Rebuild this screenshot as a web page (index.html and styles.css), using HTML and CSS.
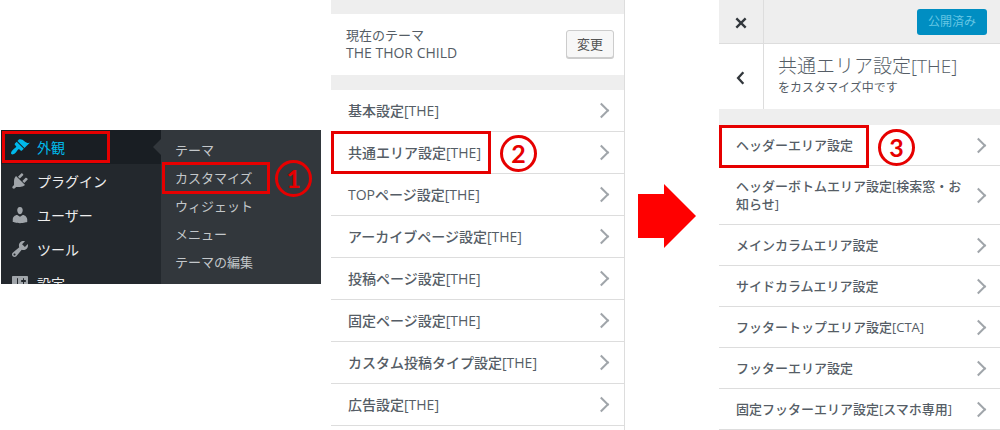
FILE: index.html
```html
<!DOCTYPE html>
<html lang="ja">
  <head>
    <meta charset="UTF-8" />
    <meta name="viewport" content="width=device-width, initial-scale=1.0" />
    <title>ヘッダーエリア設定</title>
    <link rel="stylesheet" href="styles.css">
  </head>
  <body>
    <main class="steps">
      <!-- 1. 管理メニュー -->
      <nav class="admin">
        <ul class="admin-menu">
          <li class="current marked">
            <a href="#">
              <svg class="icon" viewBox="0 0 20 20"><path d="M14.480 11.060L7.410 3.990l1.500-1.500c.5-.56 2.300-.47 3.510.32 1.210.8 1.430 1.280 2.910 2.100 1.180.64 2.450 1.260 4.450.85zm-.71.71L6.700 4.700 4.930 6.470c-.39.39-.39 1.020 0 1.410l1.060 1.060c.39.39.39 1.030 0 1.420-.6.6-1.430 1.110-2.210 1.690-.35.26-.7.53-1.010.84C1.430 14.230.4 16.080 1.400 17.070c.99 1 2.840-.03 4.180-1.360.31-.31.58-.66.85-1.020.57-.78 1.080-1.610 1.690-2.210.39-.39 1.020-.39 1.410 0l1.060 1.060c.39.39 1.020.39 1.410 0z"/></svg>
              外観
            </a>
            <span class="mark"></span>
          </li>
          <li>
            <a href="#">
              <svg class="icon" viewBox="0 0 20 20"><path d="M13.110 4.360L9.870 7.600 8 5.730l3.240-3.240c.35-.34 1.050-.2 1.560.32.52.51.66 1.210.31 1.550zm-8 1.770l.91-1.120 9.010 9.010-1.190.84c-.71.71-2.630 1.160-3.820 1.160H6.140L4.900 17.260c-.59.59-1.540.59-2.120 0-.59-.58-.59-1.530 0-2.120l1.240-1.240v-3.880c0-1.130.4-3.190 1.090-3.890zm7.260 3.970l3.240-3.240c.34-.35 1.040-.21 1.550.31.52.51.66 1.210.31 1.550l-3.240 3.250z"/></svg>
              プラグイン
            </a>
          </li>
          <li>
            <a href="#">
              <svg class="icon" viewBox="0 0 20 20"><path d="M10 9.250c-2.270 0-2.730-3.440-2.730-3.440C7 4.020 7.820 2 9.970 2c2.160 0 2.980 2.020 2.710 3.810 0 0-.41 3.440-2.680 3.440zm0 2.570L12.720 10c2.390 0 4.520 2.330 4.520 4.530v2.490s-3.650 1.130-7.240 1.130c-3.650 0-7.240-1.130-7.240-1.130v-2.490c0-2.250 1.940-4.480 4.470-4.480z"/></svg>
              ユーザー
            </a>
          </li>
          <li>
            <a href="#">
              <svg class="icon" viewBox="0 0 20 20"><path d="M16.680 9.770c-1.340 1.340-3.300 1.670-4.950.99l-5.410 6.520c-.99.99-2.590.99-3.580 0s-.99-2.590 0-3.570l6.520-5.420c-.68-1.650-.35-3.610.99-4.950 1.280-1.280 3.120-1.620 4.720-1.060l-2.890 2.890 2.820 2.820 2.860-2.870c.53 1.580.18 3.390-1.080 4.650zM3.810 16.210c.4.39 1.040.39 1.430 0 .4-.4.4-1.040 0-1.430-.39-.4-1.030-.4-1.430 0-.39.39-.39 1.030 0 1.430z"/></svg>
              ツール
            </a>
          </li>
          <li>
            <a href="#">
              <svg class="icon" viewBox="0 0 20 20"><path d="M18 16V4c0-.55-.45-1-1-1H3c-.55 0-1 .45-1 1v12c0 .55.45 1 1 1h14c.55 0 1-.45 1-1zM8 11h1c.55 0 1 .45 1 1s-.45 1-1 1H8v1.500c0 .28-.22.5-.5.5s-.5-.22-.5-.5V13H6c-.55 0-1-.45-1-1s.45-1 1-1h1V5.500c0-.28.22-.5.5-.5s.5.22.5.5V11zm5-2h-1c-.55 0-1-.45-1-1s.45-1 1-1h1V5.500c0-.28.22-.5.5-.5s.5.22.5.5V7h1c.55 0 1 .45 1 1s-.45 1-1 1h-1v5.500c0 .28-.22.5-.5.5s-.5-.22-.5-.5V9z"/></svg>
              設定
            </a>
          </li>
        </ul>
        <ul class="admin-sub">
          <li><a href="#">テーマ</a></li>
          <li class="marked">
            <a href="#">カスタマイズ</a>
            <span class="mark mark-sub"><b class="num">1</b></span>
          </li>
          <li><a href="#">ウィジェット</a></li>
          <li><a href="#">メニュー</a></li>
          <li><a href="#">テーマの編集</a></li>
        </ul>
      </nav>

      <!-- 2. カスタマイザー -->
      <section class="panel-theme">
        <div class="theme">
          <div>
            <p>現在のテーマ</p>
            <p class="theme-name">THE THOR CHILD</p>
          </div>
          <button class="change">変更</button>
        </div>
        <ul class="rows">
          <li><button class="row">基本設定[THE]</button></li>
          <li class="marked">
            <button class="row">共通エリア設定[THE]</button>
            <span class="mark mark-common"><b class="num">2</b></span>
          </li>
          <li><button class="row">TOPページ設定[THE]</button></li>
          <li><button class="row">アーカイブページ設定[THE]</button></li>
          <li><button class="row">投稿ページ設定[THE]</button></li>
          <li><button class="row">固定ページ設定[THE]</button></li>
          <li><button class="row">カスタム投稿タイプ設定[THE]</button></li>
          <li><button class="row">広告設定[THE]</button></li>
        </ul>
      </section>

      <svg class="arrow" viewBox="0 0 58 64"><path d="M0 10h26V0l32 32-32 32V54H0z"/></svg>

      <!-- 3. 共通エリア設定 -->
      <section class="panel-area">
        <div class="bar">
          <button class="side" aria-label="閉じる">
            <svg viewBox="0 0 12 12"><path d="M2 2l8 8M10 2l-8 8"/></svg>
          </button>
          <button class="publish">公開済み</button>
        </div>
        <div class="heading">
          <button class="side" aria-label="戻る">
            <svg viewBox="0 0 12 12"><path d="M8 1L3.500 6 8 11"/></svg>
          </button>
          <div class="heading-text">
            <h1>共通エリア設定[THE]</h1>
            <p>をカスタマイズ中です</p>
          </div>
        </div>
        <ul class="rows">
          <li class="marked">
            <button class="row">ヘッダーエリア設定</button>
            <span class="mark mark-header"><b class="num">3</b></span>
          </li>
          <li><button class="row">ヘッダーボトムエリア設定[検索窓・お知らせ]</button></li>
          <li><button class="row">メインカラムエリア設定</button></li>
          <li><button class="row">サイドカラムエリア設定</button></li>
          <li><button class="row">フッタートップエリア設定[CTA]</button></li>
          <li><button class="row">フッターエリア設定</button></li>
          <li><button class="row">固定フッターエリア設定[スマホ専用]</button></li>
        </ul>
      </section>
    </main>
  </body>
</html>
```
FILE: styles.css
```css
* {
  box-sizing: border-box;
}
body {
  margin: 0;
  background: #fff;
  font-family: "Open Sans", "Noto Sans CJK JP", sans-serif;
  font-size: 13px;
  color: #555d66;
}
ul {
  list-style: none;
  margin: 0;
  padding: 0;
}
p,
h1 {
  margin: 0;
}
a {
  text-decoration: none;
}
button {
  font-family: inherit;
  cursor: pointer;
}
.steps {
  display: grid;
  grid-template-columns: 330fr 307fr 81fr 281fr;
  height: 100vh;
  padding-left: 1px;
  overflow: hidden;
}

/* 管理メニュー */
.admin {
  display: grid;
  grid-template-columns: 1fr 1fr;
  align-self: start;
  margin: 130px 10px 0 0;
  background: #23282d;
}
.admin-menu {
  height: 0;
  min-height: 100%;
  overflow: hidden;
}
.admin-menu a {
  display: flex;
  align-items: center;
  gap: 7px;
  height: 34px;
  padding-left: 9px;
  font-size: 14px;
  color: #eee;
}
.admin-menu .current {
  background: #191e23;
}
.admin-menu .current a {
  color: #00b9eb;
}
/* サブメニューを指す三角 */
.admin-menu .current::after {
  content: "";
  position: absolute;
  top: 9px;
  right: 0;
  border: 8px solid transparent;
  border-right-color: #32373c;
  border-left-width: 0;
}
.icon {
  width: 20px;
  height: 20px;
  fill: #a0a5aa;
}
.current .icon {
  fill: #00b9eb;
}
.admin-sub {
  padding: 6px 0 8px;
  background: #32373c;
}
.admin-sub a {
  display: block;
  padding-left: 14px;
  line-height: 28px;
  color: #c3c7ca;
}

/* 赤枠と番号 */
.marked {
  position: relative;
}
.mark {
  position: absolute;
  top: 1px;
  left: 1px;
  width: 108px;
  height: 32px;
  border: 3px solid #e60000;
  pointer-events: none;
}
.mark-sub {
  top: -2px;
}
.mark-common {
  top: -1px;
  left: 0;
  width: 160px;
  height: 43px;
}
.mark-header {
  top: 0;
  left: 0;
  width: 150px;
  height: 43px;
}
.num {
  position: absolute;
  top: 50%;
  left: 100%;
  width: 37px;
  height: 37px;
  margin: -18px 0 0 12px;
  border: 3px solid #e60000;
  border-radius: 50%;
  font: bold 25px/31px Lato, sans-serif;
  text-align: center;
  color: #e60000;
}
.mark-sub .num {
  margin-left: 8px;
}

/* カスタマイザー */
.panel-theme {
  margin-right: 13px;
  border-right: 1px solid #ddd;
}
.theme {
  display: flex;
  align-items: center;
  justify-content: space-between;
  padding: 13px 10px 14px 15px;
  border: solid #eee;
  border-width: 14px 0 15px;
  line-height: 17px;
}
.theme-name {
  font-size: 14px;
  font-weight: 500;
}
.change {
  padding: 0 10px;
  border: 1px solid #ccc;
  border-radius: 3px;
  background: #f7f7f7;
  box-shadow: 0 1px 0 #ccc;
  font-size: 13px;
  line-height: 26px;
  color: #555;
}
.row {
  display: flex;
  align-items: center;
  justify-content: space-between;
  width: 100%;
  min-height: 42px;
  padding: 0 17px;
  border: 0;
  border-bottom: 1px solid #ddd;
  background: #fff;
  font-size: 14px;
  font-weight: 500;
  line-height: 18px;
  text-align: left;
  color: #555d66;
}
.row::after {
  content: "";
  flex: none;
  width: 9px;
  height: 9px;
  border: solid #a0a5aa;
  border-width: 2px 2px 0 0;
  transform: rotate(45deg);
}
.arrow {
  align-self: start;
  margin: 184px 23px 0 0;
  fill: #f00;
}
.panel-area .row {
  padding: 11px 16px 11px 17px;
  min-height: 41px;
  font-size: 13px;
}
.bar,
.heading {
  display: flex;
}
.bar {
  align-items: center;
  justify-content: space-between;
  padding-right: 13px;
  background: #eee;
  border-bottom: 1px solid #ddd;
}
.side {
  flex: none;
  width: 45px;
  min-height: 43px;
  padding: 0;
  border: 0;
  border-right: 1px solid #ddd;
  background: transparent;
}
.side svg {
  width: 14px;
  height: 14px;
  vertical-align: middle;
  fill: none;
  stroke: #32373c;
  stroke-width: 2;
}
.publish {
  padding: 0 11px;
  border: 0;
  border-radius: 3px;
  background: #008ec2;
  font-size: 12px;
  line-height: 26px;
  color: #66c6e4;
}
.heading {
  border-bottom: 16px solid #eee;
}
.heading-text {
  padding: 9px 14px 12px;
}
.heading h1 {
  font-size: 19px;
  font-weight: 300;
  line-height: 26px;
}
.heading p {
  font-size: 12px;
  line-height: 18px;
}
```
